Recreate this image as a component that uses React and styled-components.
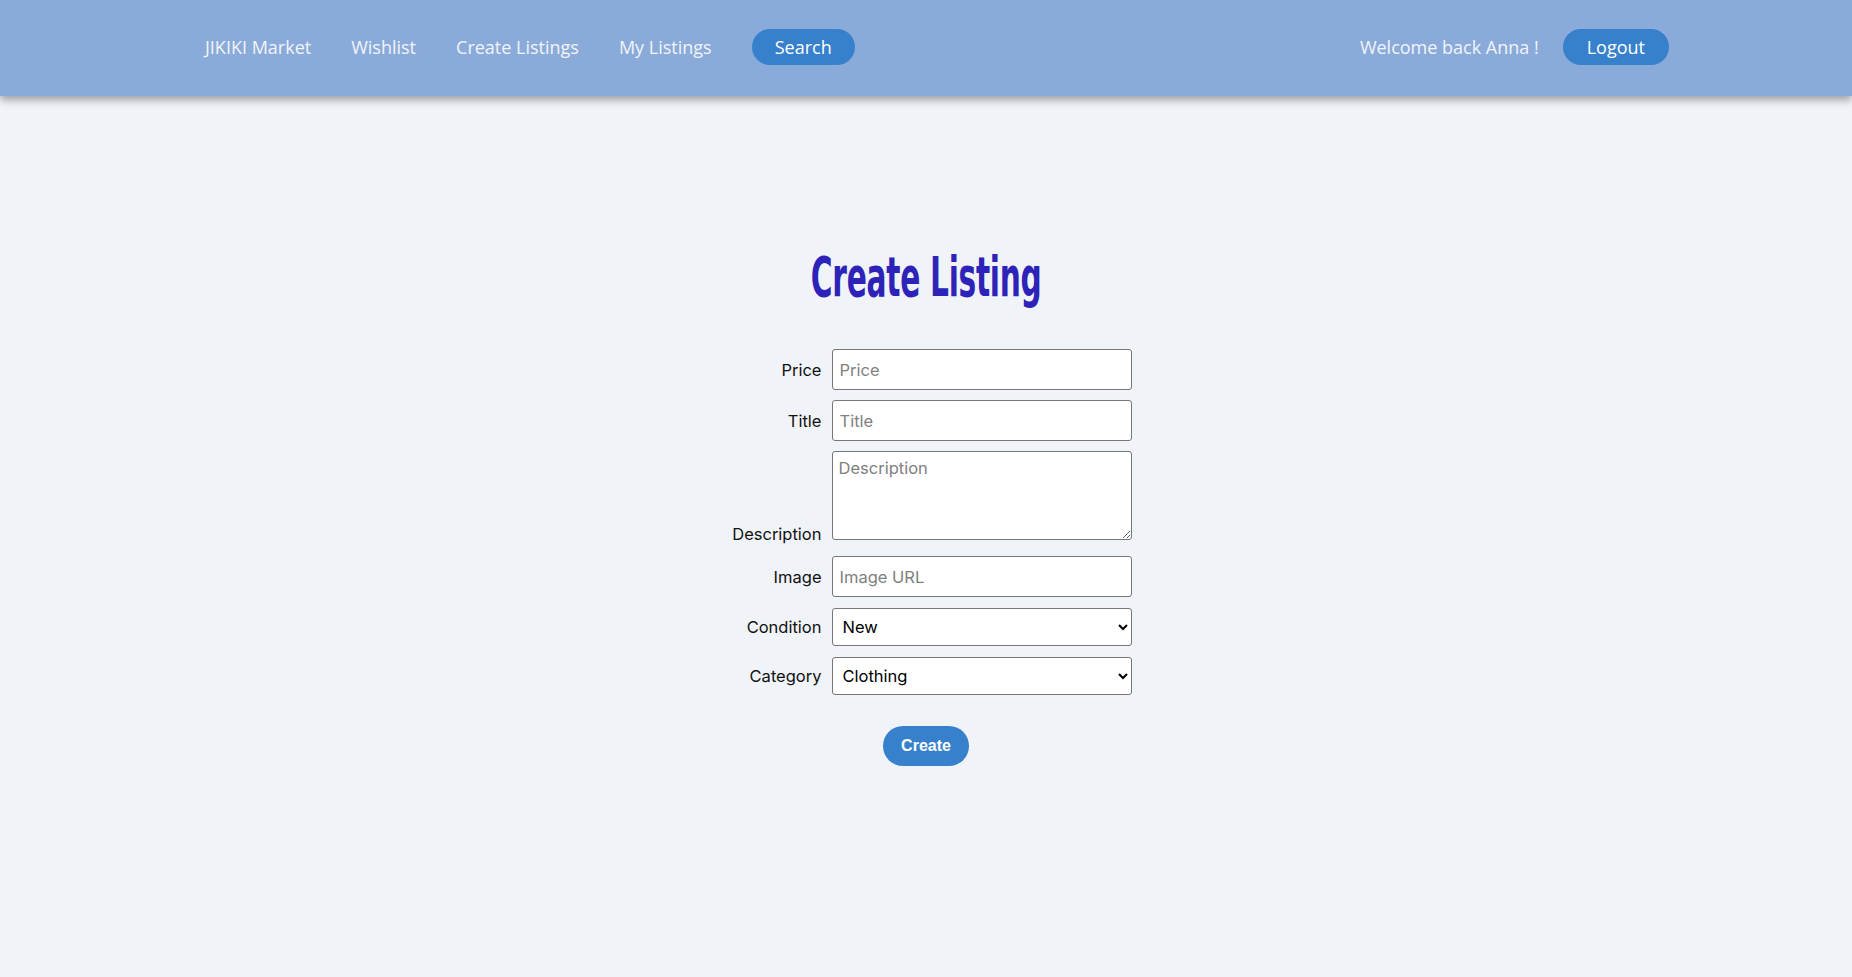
import React from 'react';
import styled, { createGlobalStyle } from 'styled-components';

const GlobalStyle = createGlobalStyle`
  html, body {
    margin: 0;
    padding: 0;
    background-color: #f0f3f8;
  }
  body {
    font-family: "Open Sans", "Noto Sans", sans-serif;
    min-height: 977px;
  }
  * {
    box-sizing: border-box;
  }
`;

const NavBar = styled.nav`
  display: flex;
  align-items: center;
  justify-content: space-between;
  height: 96px;
  padding: 0 183px 2px 205px;
  background-color: #8aabd9;
  box-shadow: 0 4px 8px rgba(0, 0, 0, 0.35);
  position: relative;
  z-index: 1;
`;

const NavGroup = styled.div`
  display: flex;
  align-items: center;
  gap: ${props => props.$gap || 40}px;
`;

const NavLink = styled.a`
  color: #f1f4fa;
  font-family: "Open Sans", "Noto Sans", sans-serif;
  font-size: 18px;
  text-decoration: none;
  cursor: pointer;
`;

const NavText = styled.span`
  color: #f1f4fa;
  font-size: 18px;
`;

const PillButton = styled.button`
  height: 36px;
  padding: 0 ${props => props.$pad || 23}px;
  border: none;
  border-radius: 18px;
  background-color: #3781cc;
  color: #ffffff;
  font-family: "Open Sans", "Noto Sans", sans-serif;
  font-size: 18px;
  cursor: pointer;
`;

const Main = styled.main`
  display: flex;
  flex-direction: column;
  align-items: center;
  padding-bottom: 60px;
`;

const Title = styled.h1`
  display: inline-block;
  margin: 151px 0 42px;
  height: 60px;
  line-height: 60px;
  font-family: "Liberation Sans Narrow", "DejaVu Sans Condensed", "Liberation Sans", sans-serif;
  font-weight: 700;
  font-size: 55px;
  color: #2d23b8;
  transform: scaleX(0.6);
  letter-spacing: -0.5px;
`;

const Form = styled.form`
  display: flex;
  flex-direction: column;
  align-items: center;
`;

const Row = styled.div`
  display: grid;
  grid-template-columns: 101px 300px;
  column-gap: 10px;
  align-items: ${props => (props.$bottom ? 'end' : 'center')};
  margin-top: ${props => props.$top ?? 10}px;
`;

const Label = styled.label`
  text-align: right;
  font-family: "Inter", "Open Sans", sans-serif;
  font-size: 16.5px;
  color: #111;
  margin-bottom: ${props => (props.$bottom ? -4 : 0)}px;
`;

const TextInput = styled.input`
  height: 41px;
  padding: 0 7px;
  border: 1px solid #767676;
  border-radius: 3px;
  background: #fff;
  font-family: "Inter", "Open Sans", sans-serif;
  font-size: 16.5px;
  color: #111;
  &::placeholder {
    color: #808080;
  }
`;

const TextArea = styled.textarea`
  height: 89px;
  padding: 6px 6px;
  border: 1px solid #767676;
  border-radius: 3px;
  background: #fff;
  font-family: "Inter", "Open Sans", sans-serif;
  font-size: 16.5px;
  color: #111;
  resize: vertical;
  &::placeholder {
    color: #808080;
  }
`;

const Select = styled.select`
  height: 38px;
  padding: 0 6px;
  border: 1px solid #767676;
  border-radius: 3px;
  background: #fff;
  font-family: "Inter", "Open Sans", sans-serif;
  font-size: 16.5px;
  font-weight: 400;
  color: #000;
`;

const CreateButton = styled.button`
  margin-top: 31px;
  height: 40px;
  padding: 0 18px;
  border: none;
  border-radius: 20px;
  background-color: #3781cc;
  color: #fff;
  font-family: "Liberation Sans", Arial, sans-serif;
  font-weight: 700;
  font-size: 16px;
  cursor: pointer;
`;

export default function App() {
  return (
    <>
      <GlobalStyle />
      <NavBar>
        <NavGroup>
          <NavLink>JIKIKI Market</NavLink>
          <NavLink>Wishlist</NavLink>
          <NavLink>Create Listings</NavLink>
          <NavLink>My Listings</NavLink>
          <PillButton>Search</PillButton>
        </NavGroup>
        <NavGroup $gap={24}>
          <NavText>Welcome back Anna !</NavText>
          <PillButton $pad={24}>Logout</PillButton>
        </NavGroup>
      </NavBar>
      <Main>
        <Title>Create Listing</Title>
        <Form onSubmit={e => e.preventDefault()}>
          <Row $top={0}>
            <Label>Price</Label>
            <TextInput placeholder="Price" />
          </Row>
          <Row>
            <Label>Title</Label>
            <TextInput placeholder="Title" />
          </Row>
          <Row $bottom $top={10}>
            <Label $bottom>Description</Label>
            <TextArea placeholder="Description" />
          </Row>
          <Row $top={16}>
            <Label>Image</Label>
            <TextInput placeholder="Image URL" />
          </Row>
          <Row $top={11}>
            <Label>Condition</Label>
            <Select defaultValue="New">
              <option>New</option>
              <option>Used - Like New</option>
              <option>Used - Good</option>
              <option>Used - Fair</option>
            </Select>
          </Row>
          <Row $top={11}>
            <Label>Category</Label>
            <Select defaultValue="Clothing">
              <option>Clothing</option>
              <option>Electronics</option>
              <option>Furniture</option>
              <option>Books</option>
            </Select>
          </Row>
          <CreateButton type="submit">Create</CreateButton>
        </Form>
      </Main>
    </>
  );
}
